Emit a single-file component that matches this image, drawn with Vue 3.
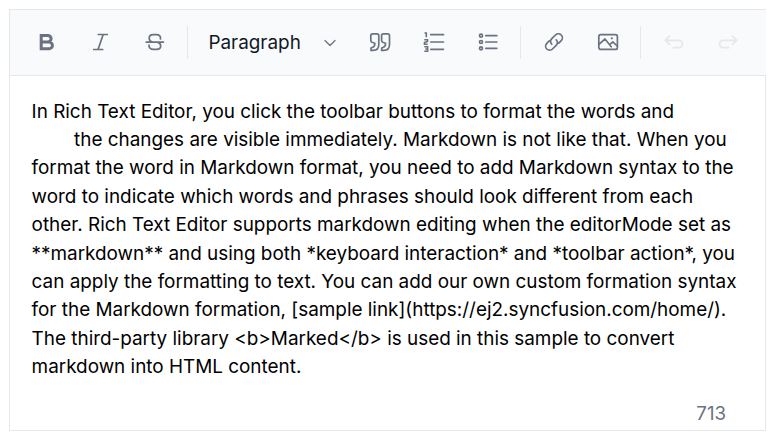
<script setup>
const content = `In Rich Text Editor, you click the toolbar buttons to format the words and
        the changes are visible immediately. Markdown is not like that. When you format the word in Markdown format, you need to add Markdown syntax to the word to indicate which words and phrases should look different from each other. Rich Text Editor supports markdown editing when the editorMode set as **markdown** and using both *keyboard interaction* and *toolbar action*, you can apply the formatting to text. You can add our own custom formation syntax for the Markdown formation, [sample link](https://ej2.syncfusion.com/home/). The third-party library <b>Marked</b> is used in this sample to convert markdown into HTML content.`
</script>

<template>
  <div class="editor">
    <div class="toolbar">
      <button class="tool" aria-label="Bold">
        <svg viewBox="0 0 24 24"><path class="bold" d="M7.2 5.4H13.8A3.3 3.3 0 0 1 13.8 12H7.2ZM7.2 12H15A3.35 3.35 0 0 1 15 18.8H7.2Z" /></svg>
      </button>
      <button class="tool" aria-label="Italic">
        <svg viewBox="0 0 24 24"><path d="M10.3 4.5H19.3M5.7 19.5H14.7M15.2 4.5L10 19.5" /></svg>
      </button>
      <button class="tool" aria-label="Strikethrough">
        <svg viewBox="0 0 24 24"><path d="M4.2 12.1H21.5M18.5 9V8.3C18.5 6 16.8 4.6 14.5 4.6H11.2C9 4.6 7.2 6 7.2 8.2C7.2 10.3 8.5 11.5 10.3 12.1M15.5 12.1C17.4 12.7 18.7 13.8 18.7 15.8C18.7 18 17 19.4 14.8 19.4H11.2C8.8 19.4 7 18 7 15.6V15" /></svg>
      </button>
      <span class="separator"></span>
      <button class="format">
        <span>Paragraph</span>
        <svg viewBox="0 0 12 12"><path d="M1 3.5L6 8.5L11 3.5" /></svg>
      </button>
      <button class="tool" aria-label="Quote">
        <svg viewBox="0 0 24 24"><path d="M4.6 3.8H9Q10.8 3.8 10.8 5.6V14.5Q10.8 20.4 5 20.4H3V18L4.8 17.2Q7.2 16.3 6.8 13.2L4 12.3Q2.8 11.8 2.8 10.5V5.6Q2.8 3.8 4.6 3.8ZM15.4 3.8H19.7Q21.5 3.8 21.5 5.6V14.5Q21.5 20.4 15.7 20.4H13.7V18L15.5 17.2Q17.9 16.3 17.5 13.2L14.8 12.3Q13.6 11.8 13.6 10.5V5.6Q13.6 3.8 15.4 3.8Z" /></svg>
      </button>
      <button class="tool" aria-label="Numbered list">
        <svg viewBox="0 0 24 24"><path d="M8.8 4.7H21.5M8.8 12H21.5M8.8 19.3H21.5" /><path class="digits" d="M2.5 3H4.3V7.2M2.3 9.8H5.5V11.4L2.5 12.6V14.2H5.7M2.3 16.8H5.6V21.2H2.3M3.3 19H5.6" /></svg>
      </button>
      <button class="tool" aria-label="Bulleted list">
        <svg viewBox="0 0 24 24"><path d="M9.8 5.7H20.8M9.8 12H20.8M9.8 18.3H20.8" /><circle cx="5" cy="5.7" r="1.5" /><circle cx="5" cy="12" r="1.5" /><circle cx="5" cy="18.3" r="1.5" /></svg>
      </button>
      <span class="separator"></span>
      <button class="tool" aria-label="Link">
        <svg viewBox="0 0 24 24"><path d="M9.8 14.2C8.2 12.4 8.3 10.2 9.8 8.7L13.5 5A3.9 3.9 0 0 1 19.2 10.7L16.8 13.1M14.2 9.8C15.8 11.6 15.7 13.8 14.2 15.3L10.5 19A3.9 3.9 0 0 1 4.8 13.3L7.2 10.9" /></svg>
      </button>
      <button class="tool" aria-label="Image">
        <svg viewBox="0 0 24 24"><rect x="2.8" y="4.7" width="18.6" height="14.7" rx="2" /><path d="M3.2 14.2L9 9L15.2 16.8M13.6 14.7L16.8 11.9L21.2 16" /><circle class="dot" cx="15.8" cy="8.3" r="1.1" /></svg>
      </button>
      <span class="separator"></span>
      <button class="tool disabled" aria-label="Undo" disabled>
        <svg viewBox="0 0 24 24"><path d="M7.6 6.2L3.3 10.3L7.6 14.4M3.6 10.3H16.8A3.65 3.65 0 0 1 16.8 17.6H11.3" /></svg>
      </button>
      <button class="tool disabled" aria-label="Redo" disabled>
        <svg viewBox="0 0 24 24"><path d="M16.4 6.2L20.7 10.3L16.4 14.4M20.4 10.3H7.2A3.65 3.65 0 0 0 7.2 17.6H12.7" /></svg>
      </button>
    </div>
    <div class="content">{{ content }}</div>
    <div class="count">713</div>
  </div>
</template>

<style>
body {
  background: #fff;
}
</style>

<style scoped>
.editor {
  box-sizing: border-box;
  width: 757px;
  height: 422px;
  margin: 9px 0 0 9px;
  border: 1px solid #e5e7eb;
  display: flex;
  flex-direction: column;
  font-family: Inter, sans-serif;
  background: #fff;
}
.toolbar {
  box-sizing: border-box;
  flex: none;
  height: 66px;
  margin-right: -1px;
  padding-left: 9px;
  border-bottom: 1px solid #e5e7eb;
  background: #f9fafb;
  display: flex;
  align-items: center;
}
button {
  border: 0;
  padding: 0;
  background: none;
  font: inherit;
}
.tool {
  flex: none;
  width: 54px;
  height: 64px;
  padding-bottom: 1px;
  display: flex;
  align-items: center;
  justify-content: center;
  color: #6b7280;
}
.disabled {
  color: #e5e7eb;
}
svg {
  fill: none;
  stroke: currentColor;
  stroke-width: 1.7;
  stroke-linecap: round;
  stroke-linejoin: round;
}
.tool svg {
  width: 24px;
  height: 24px;
}
.bold {
  stroke-width: 3;
  stroke-linejoin: miter;
}
.digits {
  stroke-width: 1.6;
  stroke-linecap: butt;
  stroke-linejoin: miter;
}
.dot {
  fill: currentColor;
  stroke: none;
}
.separator {
  flex: none;
  width: 1px;
  height: 33px;
  margin: 0 6px 0 5px;
  background: #e5e7eb;
}
.tool + .separator:nth-child(4) {
  margin: 0 0 0 6px;
}
.format {
  flex: none;
  box-sizing: border-box;
  width: 165px;
  padding: 0 17px 0 20.4px;
  display: flex;
  align-items: center;
  justify-content: space-between;
  font-size: 18.9px;
  line-height: 28px;
  color: #111827;
}
.format svg {
  width: 12px;
  height: 12px;
  stroke: #6b7280;
  stroke-width: 1.3;
}
.content {
  flex: 1;
  padding: 21.8px 22px 0 21.6px;
  font-size: 18.9px;
  line-height: 28.35px;
  white-space: pre-wrap;
  color: #000;
}
.count {
  padding: 0 39px 2px 0;
  text-align: right;
  font-size: 18.67px;
  line-height: 28px;
  color: #6b7280;
}
</style>
